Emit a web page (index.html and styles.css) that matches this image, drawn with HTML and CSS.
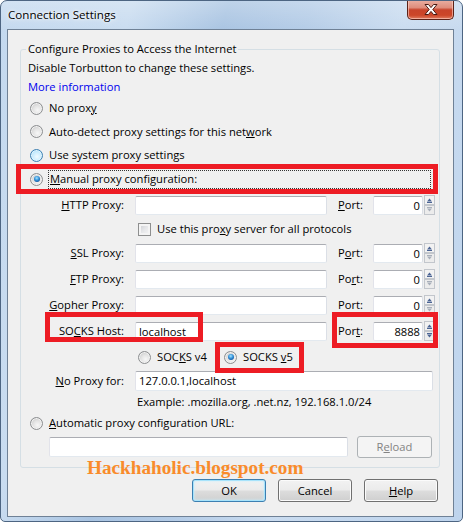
FILE: index.html
```html
<!DOCTYPE html>
<html>
<head>
<meta charset="utf-8">
<title>Connection Settings</title>
<link rel="stylesheet" href="styles.css">
</head>
<body>
<div class="window">
  <div class="titlebar">
    <span class="title">Connection Settings</span>
    <span class="close">
      <svg width="14" height="11" viewBox="0 0 14 11"><path d="M1 0.5h3.5L7 3.6 9.5 0.5H13L8.8 5.5 13 10.5H9.5L7 7.4 4.5 10.5H1L5.2 5.5z" fill="#fff" stroke="#4a1a12" stroke-width="1" stroke-linejoin="round"/></svg>
    </span>
  </div>
  <div class="client">
    <fieldset class="group">
      <legend>Configure Proxies to Access the Internet</legend>
      <div class="note">Disable Torbutton to change these settings.</div>
      <div class="link">More information</div>
      <div class="opt h24"><span class="radio"></span><span>No prox<u>y</u></span></div>
      <div class="opt h23"><span class="radio"></span><span>Auto-detect proxy settings for this net<u>w</u>ork</span></div>
      <div class="opt h24"><span class="radio hover"></span><span>Use system proxy settings</span></div>
      <div class="opt h24"><span class="radio checked"></span><span class="focus"><u>M</u>anual proxy configuration:</span></div>

      <div class="field first">
        <span class="lbl"><u>H</u>TTP Proxy:</span><span class="input host"></span>
        <span class="plbl"><u>P</u>ort:</span><span class="input port">0</span>
        <svg class="spin" width="11" height="20" viewBox="0 0 11 20"><rect x="0.5" y="0.5" width="10" height="9" fill="#f2f2f2" stroke="#c2c6cc"/><rect x="0.5" y="10.5" width="10" height="9" fill="#ececec" stroke="#c2c6cc"/><path d="M3 6.5h5L5.5 3.5z" fill="#4b6494"/><path d="M3 7.5h5" stroke="#4b6494"/><path d="M3 12.5h5" stroke="#a8afba"/><path d="M3 13.5h5L5.5 16.5z" fill="#a8afba"/></svg>
      </div>
      <div class="check"><span class="box"></span><span>Use this pro<u>x</u>y server for all protocols</span></div>
      <div class="field">
        <span class="lbl"><u>S</u>SL Proxy:</span><span class="input host"></span>
        <span class="plbl">P<u>o</u>rt:</span><span class="input port">0</span>
        <svg class="spin" width="11" height="20" viewBox="0 0 11 20"><rect x="0.5" y="0.5" width="10" height="9" fill="#f2f2f2" stroke="#c2c6cc"/><rect x="0.5" y="10.5" width="10" height="9" fill="#ececec" stroke="#c2c6cc"/><path d="M3 6.5h5L5.5 3.5z" fill="#4b6494"/><path d="M3 7.5h5" stroke="#4b6494"/><path d="M3 12.5h5" stroke="#a8afba"/><path d="M3 13.5h5L5.5 16.5z" fill="#a8afba"/></svg>
      </div>
      <div class="field">
        <span class="lbl"><u>F</u>TP Proxy:</span><span class="input host"></span>
        <span class="plbl">Po<u>r</u>t:</span><span class="input port">0</span>
        <svg class="spin" width="11" height="20" viewBox="0 0 11 20"><rect x="0.5" y="0.5" width="10" height="9" fill="#f2f2f2" stroke="#c2c6cc"/><rect x="0.5" y="10.5" width="10" height="9" fill="#ececec" stroke="#c2c6cc"/><path d="M3 6.5h5L5.5 3.5z" fill="#4b6494"/><path d="M3 7.5h5" stroke="#4b6494"/><path d="M3 12.5h5" stroke="#a8afba"/><path d="M3 13.5h5L5.5 16.5z" fill="#a8afba"/></svg>
      </div>
      <div class="field">
        <span class="lbl"><u>G</u>opher Proxy:</span><span class="input host"></span>
        <span class="plbl">Port:</span><span class="input port">0</span>
        <svg class="spin" width="11" height="20" viewBox="0 0 11 20"><rect x="0.5" y="0.5" width="10" height="9" fill="#f2f2f2" stroke="#c2c6cc"/><rect x="0.5" y="10.5" width="10" height="9" fill="#ececec" stroke="#c2c6cc"/><path d="M3 6.5h5L5.5 3.5z" fill="#4b6494"/><path d="M3 7.5h5" stroke="#4b6494"/><path d="M3 12.5h5" stroke="#a8afba"/><path d="M3 13.5h5L5.5 16.5z" fill="#a8afba"/></svg>
      </div>
      <div class="field">
        <span class="lbl">SO<u>C</u>KS Host:</span><span class="input host">localhost</span>
        <span class="plbl">Por<u>t</u>:</span><span class="input port">8888</span>
        <svg class="spin" width="11" height="20" viewBox="0 0 11 20"><rect x="0.5" y="0.5" width="10" height="9" fill="#f2f2f2" stroke="#c2c6cc"/><rect x="0.5" y="10.5" width="10" height="9" fill="#ececec" stroke="#c2c6cc"/><path d="M3 6.5h5L5.5 3.5z" fill="#4b6494"/><path d="M3 7.5h5" stroke="#4b6494"/><path d="M3 12.5h5" stroke="#4b6494"/><path d="M3 13.5h5L5.5 16.5z" fill="#4b6494"/></svg>
      </div>
      <div class="socks">
        <span class="ver"><span class="radio"></span><span>SOC<u>K</u>S v4</span></span>
        <span class="ver"><span class="radio checked"></span><span>SOCKS <u>v</u>5</span></span>
      </div>
      <div class="noproxy">
        <span class="lbl"><u>N</u>o Proxy for:</span><span class="input wide">127.0.0.1,localhost</span>
      </div>
      <div class="example">Example: .mozilla.org, .net.nz, 192.168.1.0/24</div>
      <div class="opt h20"><span class="radio"></span><span><u>A</u>utomatic proxy configuration URL:</span></div>
      <div class="url">
        <span class="input urlbox"></span>
        <span class="btn disabled">R<u>e</u>load</span>
      </div>
    </fieldset>
    <div class="buttons">
      <span class="btn default">OK</span>
      <span class="btn">Cancel</span>
      <span class="btn"><u>H</u>elp</span>
    </div>
  </div>

  <div class="mark m-manual"></div>
  <div class="mark m-host"></div>
  <div class="mark m-port"></div>
  <div class="mark m-v5"></div>
  <div class="watermark">Hackhaholic.blogspot.com</div>
</div>
</body>
</html>
```

FILE: styles.css
```css
* { box-sizing: border-box; }
html, body { margin: 0; padding: 0; background: #ffffff; }
body {
  font-family: "Open Sans", "Noto Sans", sans-serif;
  font-size: 11.2px;
  line-height: 16px;
  color: #000;
}
u { text-decoration: underline; text-underline-offset: 1px; }

.window {
  width: 463px;
  height: 522px;
  position: relative;
  display: flex;
  flex-direction: column;
  border: 1px solid #4d6582;
  border-radius: 7px 7px 5px 5px;
  background:
    linear-gradient(180deg, rgba(255,255,255,0.25) 0%, rgba(255,255,255,0) 30px),
    linear-gradient(105deg, #c4d9ef 0%, #c9dcf0 22%, #a9c4e2 38%, #b4cce7 52%, #cadcf0 68%, #bed4ed 100%);
  overflow: hidden;
}

.titlebar {
  height: 28px;
  display: flex;
  align-items: center;
  padding-left: 7px;
}
.title {
  font-size: 11.6px;
  text-shadow: 0 0 6px #ffffff, 0 0 3px #ffffff;
}
.close {
  margin-left: auto;
  margin-right: 8px;
  align-self: flex-start;
  margin-top: -1px;
  width: 47px;
  height: 20px;
  display: flex;
  align-items: center;
  justify-content: center;
  border: 1px solid #5b2218;
  border-top: none;
  border-radius: 0 0 5px 5px;
  background: linear-gradient(180deg, #eab0a3 0%, #df8d7c 40%, #c8432a 52%, #cc4628 80%, #e07c60 100%);
  box-shadow: inset 0 0 0 1px rgba(255,210,200,0.6);
}
.close svg { display: block; }

.client {
  flex: 1;
  margin: 0 8px 4px 6px;
  border: 1px solid #6f8196;
  background: #f0f0f0;
  display: flex;
  flex-direction: column;
}

.group {
  margin: 11px 13px 0 12px;
  padding: 0 0 6px 0;
  border: 1px solid #d5dfe5;
  border-radius: 3px;
  min-width: 0;
}
.group legend {
  margin-left: 5px;
  padding: 0 2px;
  line-height: 16px;
}

.note { margin-top: 2px; height: 18px; line-height: 18px; padding-left: 7px; }
.link { height: 19px; line-height: 19px; padding-left: 7px; color: #0000ee; }

.opt { display: flex; align-items: center; padding-left: 9px; gap: 6px; }
.h24 { height: 24px; }
.h23 { height: 23px; }
.h20 { height: 20px; }

.radio {
  width: 13px;
  height: 13px;
  flex: none;
  border-radius: 50%;
  border: 1px solid #8c8e90;
  background: radial-gradient(circle at 60% 65%, #f7f7f7 0%, #e3e3e3 45%, #c9c9c9 80%, #bdbdbd 100%);
  box-shadow: inset 0 0 0 1px #f2f2f2;
  display: flex;
  align-items: center;
  justify-content: center;
}
.radio.hover {
  border-color: #3c7fb1;
  background: radial-gradient(circle at 55% 60%, #f0faff 0%, #c9ecfd 50%, #8fd2f6 100%);
  box-shadow: inset 0 0 0 1px #dff4fe;
}
.radio.checked::after {
  content: "";
  width: 6px;
  height: 6px;
  border-radius: 50%;
  background: radial-gradient(circle at 45% 35%, #a8e4ff 0%, #3b99dd 40%, #135aa6 75%, #0b3b74 100%);
}

.focus {
  flex: 1;
  height: 19px;
  margin-left: -1px;
  margin-right: 8px;
  padding-left: 1px;
  border: 1px dotted #333;
  display: flex;
  align-items: center;
}

.field { display: flex; align-items: center; height: 26px; }
.field.first { margin-top: 1px; }
.lbl { width: 103px; text-align: right; margin-right: 11px; flex: none; }
.plbl { width: 35px; margin-left: 11px; flex: none; }

.input {
  display: block;
  flex: none;
  height: 19px;
  line-height: 17px;
  padding: 0 3px;
  background: #ffffff;
  border: 1px solid;
  border-color: #abadb3 #dbdfe6 #e3e9ef #e2e3ea;
  border-radius: 2px;
  white-space: nowrap;
}
.input.host { width: 192px; }
.input.port { width: 50px; text-align: right; padding-right: 2px; }
.input.wide { width: 298px; height: 20px; line-height: 18px; }
.input.urlbox { width: 299px; height: 20px; }
.spin { display: block; flex: none; margin-left: 1px; }

.check { display: flex; align-items: center; height: 22px; padding-left: 117px; gap: 6px; }
.box {
  width: 13px;
  height: 13px;
  flex: none;
  border: 1px solid #8e8f8f;
  background: linear-gradient(135deg, #c9cbcf 0%, #e6e7e9 50%, #f7f7f7 100%);
  box-shadow: inset 0 0 0 2px #f4f4f4;
}

.socks { display: flex; align-items: center; height: 26px; padding-left: 117px; }
.ver { display: flex; align-items: center; gap: 6px; width: 86px; }

.noproxy { display: flex; align-items: center; height: 21px; }
.example { height: 22px; line-height: 22px; padding-left: 116px; }

.url { display: flex; align-items: center; height: 28px; padding-left: 28px; gap: 9px; }

.btn {
  display: flex;
  align-items: center;
  justify-content: center;
  flex: none;
  width: 74px;
  height: 23px;
  border: 1px solid #707070;
  border-radius: 3px;
  background: linear-gradient(180deg, #f2f2f2 0%, #ebebeb 48%, #dddddd 52%, #cfcfcf 100%);
  box-shadow: inset 0 0 0 1px #fbfbfb;
}
.btn.disabled {
  width: 75px;
  height: 22px;
  border-color: #adb2b5;
  background: #f4f4f4;
  color: #838383;
  box-shadow: none;
}
.btn.default {
  border-color: #3c7fb1;
  box-shadow: inset 0 0 0 1px #a7e3fb, inset 0 0 3px 1px #c9eefd;
}

.buttons {
  display: flex;
  justify-content: flex-end;
  gap: 12px;
  margin-top: 11px;
  padding-right: 15px;
}

.mark {
  position: absolute;
  border: 5px solid #ed1c24;
}
.m-manual { left: 15px; top: 163px; width: 422px; height: 30px; }
.m-host { left: 44px; top: 311px; width: 158px; height: 30px; }
.m-port { left: 331px; top: 311px; width: 106px; height: 36px; }
.m-v5 { left: 214px; top: 341px; width: 89px; height: 31px; }

.watermark {
  position: absolute;
  left: 86px;
  top: 457px;
  font-family: "Liberation Serif", "Times New Roman", serif;
  font-weight: bold;
  font-size: 19.2px;
  line-height: 19px;
  color: #f98b2b;
  white-space: nowrap;
}
```
